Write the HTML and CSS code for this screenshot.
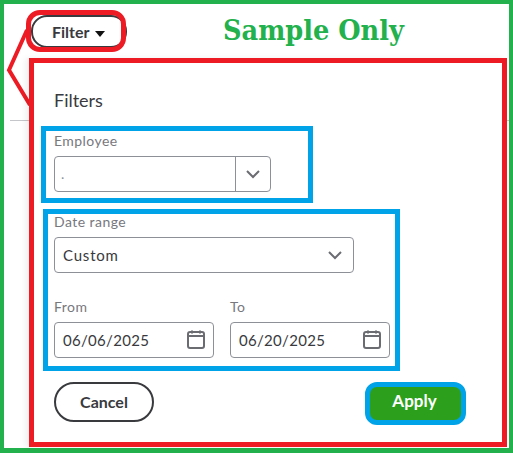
FILE: index.html
```html
<!DOCTYPE html>
<html lang="en">
<head>
<meta charset="utf-8">
<title>Filter sample</title>
<link rel="stylesheet" href="styles.css">
</head>
<body>
<div class="frame">
  <div class="rule"></div>
  <svg class="callout" width="30" height="105" viewBox="0 0 30 105" aria-hidden="true">
    <polyline points="23,26 5,66 26,101"/>
  </svg>
  <header class="top">
    <div class="filter-ring">
      <button class="filter-btn">Filter <span class="caret"></span></button>
    </div>
    <h1 class="stamp">Sample Only</h1>
  </header>
  <section class="panel">
    <h2 class="panel-title">Filters</h2>
    <div class="mark mark-employee">
      <label class="lbl">Employee</label>
      <div class="combo">
        <span class="combo-value">.</span>
        <span class="combo-arrow">
          <svg width="16" height="10" viewBox="0 0 16 10"><path d="M2 2l6 6 6-6"/></svg>
        </span>
      </div>
    </div>
    <div class="mark mark-date">
      <label class="lbl">Date range</label>
      <div class="select">
        <span>Custom</span>
        <svg width="16" height="10" viewBox="0 0 16 10"><path d="M2 2l6 6 6-6"/></svg>
      </div>
      <div class="dates">
        <div class="date-field">
          <label class="lbl">From</label>
          <div class="date">
            <span>06/06/2025</span>
            <svg class="cal" width="20" height="20" viewBox="0 0 20 20"><rect x="2" y="2" width="16" height="16" rx="2"/><path d="M2 6h16M6 .5v3M14 .5v3"/></svg>
          </div>
        </div>
        <div class="date-field">
          <label class="lbl">To</label>
          <div class="date">
            <span>06/20/2025</span>
            <svg class="cal" width="20" height="20" viewBox="0 0 20 20"><rect x="2" y="2" width="16" height="16" rx="2"/><path d="M2 6h16M6 .5v3M14 .5v3"/></svg>
          </div>
        </div>
      </div>
    </div>
    <footer class="actions">
      <button class="cancel">Cancel</button>
      <button class="apply">Apply</button>
    </footer>
  </section>
</div>
</body>
</html>
```
FILE: styles.css
```css
* { box-sizing: border-box; }
html, body { margin: 0; padding: 0; background: #fff; }
body { width: 513px; height: 453px; overflow: hidden; font-family: "Lato", "Liberation Sans", sans-serif; color: #393a3d; }
.frame { position: relative; width: 513px; height: 453px; border: solid #22b14c; border-width: 4px 4px 5px 4px; }
.rule { position: absolute; left: 6px; right: 0; top: 116px; height: 1px; background: #c4c6c9; }
.callout { position: absolute; left: 0; top: 0; overflow: visible; }
.callout polyline { fill: none; stroke: #ed1c24; stroke-width: 4; }
.top { display: flex; align-items: flex-start; height: 54px; padding: 6px 0 0 22px; }
.filter-ring { position: relative; width: 100px; height: 42px; }
.filter-ring::after { content: ""; position: absolute; inset: 0; border: 5px solid #ed1c24; border-radius: 14px; pointer-events: none; }
.filter-btn { position: absolute; left: 5px; top: 5px; width: 96px; height: 33px; border: 2px solid #393a3d; border-radius: 16px; background: #fff; font: 700 16px "Lato", sans-serif; color: #393a3d; text-align: left; padding: 0 0 0 19px; }
.caret { display: inline-block; width: 0; height: 0; margin-left: 2px; vertical-align: 1px; border: 5px solid transparent; border-top: 6px solid #111; border-bottom: 0; }
.stamp { margin: 1px 0 0 97px; font: 700 28.500px/38px "DejaVu Serif Condensed", "DejaVu Serif", serif; color: #22b14c; white-space: nowrap; }
.panel { position: relative; width: 478px; height: 389px; margin-left: 25px; background: #fff; border: 5px solid #ed1c24; box-shadow: -4px 0 6px rgba(0,0,0,.06); }
.panel-title { margin: 0; position: absolute; left: 20px; top: 26px; font: 400 18px/22px "Lato", sans-serif; color: #393a3d; }
.mark { position: absolute; border: 5px solid #00a2e8; padding: 0 0 0 8px; }
.mark-employee { left: 7px; top: 63px; width: 272px; height: 77px; }
.mark-date { left: 9px; top: 146px; width: 357px; height: 162px; padding-left: 6px; }
.lbl { display: block; font-size: 14px; line-height: 16px; color: #77787e; letter-spacing: .45px; }
.mark-employee .lbl { margin-top: 2px; }
.combo { display: flex; width: 217px; height: 36px; margin-top: 7px; border: 1px solid #8d9096; border-radius: 4px; }
.combo-value { flex: 1; padding: 8px 0 0 6px; font-size: 14px; color: #8d9096; }
.combo-arrow { width: 35px; border-left: 1px solid #8d9096; display: flex; align-items: center; justify-content: center; }
svg path { fill: none; stroke: #6b6c72; stroke-width: 2; }
.select { display: flex; align-items: center; justify-content: space-between; width: 300px; height: 36px; margin-top: 7px; padding: 0 10px 0 8px; border: 1px solid #8d9096; border-radius: 4px; font-size: 15px; letter-spacing: .8px; }
.dates { display: flex; gap: 16px; margin-top: 26px; }
.date-field { width: 160px; }
.date { display: flex; align-items: center; justify-content: space-between; height: 36px; margin-top: 7px; padding: 0 7px 0 8px; border: 1px solid #8d9096; border-radius: 4px; font-size: 15px; letter-spacing: .3px; }
.cal rect { fill: none; stroke: #6b6c72; stroke-width: 2; }
.actions { position: absolute; left: 20px; top: 319px; width: 412px; display: flex; justify-content: space-between; }
.cancel { width: 100px; height: 40px; padding: 0 0 2px; border: 2px solid #393a3d; border-radius: 20px; background: #fff; font: 700 16px "Lato", sans-serif; color: #393a3d; }
.apply { width: 101px; height: 43px; padding: 0 2px 6px 0; border: 5px solid #00a2e8; border-radius: 12px; background: #2ca01c; font: 700 17px "Lato", sans-serif; color: #fff; }
```
